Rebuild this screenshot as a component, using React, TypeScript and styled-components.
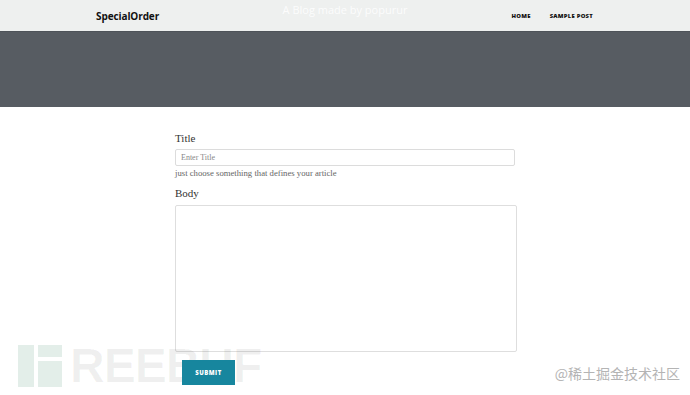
import styled, { createGlobalStyle } from "styled-components";

const GlobalStyle = createGlobalStyle`
  html, body {
    margin: 0;
    padding: 0;
    background: #ffffff;
  }
  body {
    font-family: "Liberation Serif", serif;
    width: 690px;
    height: 395px;
    overflow: hidden;
    position: relative;
  }
`;

const Page = styled.div`
  width: 690px;
  height: 395px;
  position: relative;
  overflow: hidden;
`;

const NavBar = styled.header`
  height: 31px;
  background: #eef0ef;
  display: flex;
  align-items: center;
  justify-content: space-between;
  padding: 0 97px 0 96px;
  position: relative;
`;

const Brand = styled.a`
  font-family: "Open Sans", sans-serif;
  font-weight: 700;
  font-size: 10px;
  color: #111;
  text-decoration: none;
  letter-spacing: -0.1px;
`;

const MastTitle = styled.div`
  position: absolute;
  left: 0;
  right: 0;
  top: 2px;
  text-align: center;
  font-family: "Open Sans", sans-serif;
  font-size: 11px;
  color: #ffffff;
  opacity: 0.85;
`;

const NavLinks = styled.nav`
  display: flex;
  gap: 19px;
`;

const NavLink = styled.a`
  font-family: "Open Sans", sans-serif;
  font-weight: 800;
  font-size: 5.9px;
  letter-spacing: 0.25px;
  color: #111;
  text-decoration: none;
`;

const Banner = styled.div`
  height: 76px;
  background: #575c62;
  border-top: 1px solid #4e5359;
  box-sizing: border-box;
`;

const Form = styled.form`
  width: 342px;
  margin: 24px 0 0 175px;
  display: flex;
  flex-direction: column;
  align-items: flex-start;
`;

const Label = styled.label<{ $gap?: number }>`
  font-size: 11px;
  line-height: 14px;
  color: #333;
  margin-top: ${(p) => p.$gap ?? 0}px;
`;

const TextInput = styled.input`
  width: 340px;
  height: 17px;
  box-sizing: border-box;
  margin-top: 4px;
  border: 1px solid #dcdcdc;
  border-radius: 2px;
  padding: 0 5px;
  font-family: "Liberation Serif", serif;
  font-size: 8px;
  color: #444;
  outline: none;
  &::placeholder {
    color: #888;
  }
`;

const Help = styled.small`
  font-size: 8.7px;
  line-height: 11px;
  margin-top: 2px;
  color: #666;
`;

const TextArea = styled.textarea`
  width: 342px;
  height: 147px;
  box-sizing: border-box;
  margin-top: 5px;
  border: 1px solid #dedede;
  border-radius: 2px;
  resize: none;
  outline: none;
`;

const Submit = styled.button`
  margin: 8px 0 0 7px;
  width: 53px;
  height: 25px;
  border: none;
  background: #17869e;
  color: #fff;
  font-family: "Open Sans", sans-serif;
  font-weight: 800;
  font-size: 6px;
  letter-spacing: 0.5px;
  padding: 0;
  position: relative;
  z-index: 2;
`;

const Watermark = styled.div`
  position: absolute;
  left: 18px;
  top: 345px;
  display: flex;
  align-items: flex-end;
  gap: 4px;
  pointer-events: none;
  z-index: 1;
`;

const MarkBlock = styled.div<{ $w: number; $h: number }>`
  width: ${(p) => p.$w}px;
  height: ${(p) => p.$h}px;
  background: #e3eee9;
`;

const MarkStack = styled.div`
  display: flex;
  flex-direction: column;
  gap: 4px;
`;

const MarkText = styled.span`
  font-family: "Liberation Sans", sans-serif;
  font-weight: 700;
  font-size: 48px;
  line-height: 42px;
  letter-spacing: -1px;
  margin-left: 4px;
  color: rgba(0, 0, 0, 0.06);
`;

const Credit = styled.div`
  position: absolute;
  right: 10px;
  top: 364px;
  font-family: "Noto Sans CJK SC", sans-serif;
  font-size: 14px;
  line-height: 18px;
  color: #b4b4b4;
`;

export default function App() {
  return (
    <Page>
      <GlobalStyle />
      <NavBar>
        <Brand href="#">SpecialOrder</Brand>
        <MastTitle>A Blog made by popurur</MastTitle>
        <NavLinks>
          <NavLink href="#">HOME</NavLink>
          <NavLink href="#">SAMPLE POST</NavLink>
        </NavLinks>
      </NavBar>
      <Banner />
      <Form onSubmit={(e) => e.preventDefault()}>
        <Label>Title</Label>
        <TextInput placeholder="Enter Title" />
        <Help>just choose something that defines your article</Help>
        <Label $gap={7}>Body</Label>
        <TextArea />
        <Submit type="submit">SUBMIT</Submit>
      </Form>
      <Watermark>
        <MarkBlock $w={16} $h={42} />
        <MarkStack>
          <MarkBlock $w={24} $h={12} />
          <MarkBlock $w={24} $h={26} />
        </MarkStack>
        <MarkText>REEBUF</MarkText>
      </Watermark>
      <Credit>@稀土掘金技术社区</Credit>
    </Page>
  );
}
